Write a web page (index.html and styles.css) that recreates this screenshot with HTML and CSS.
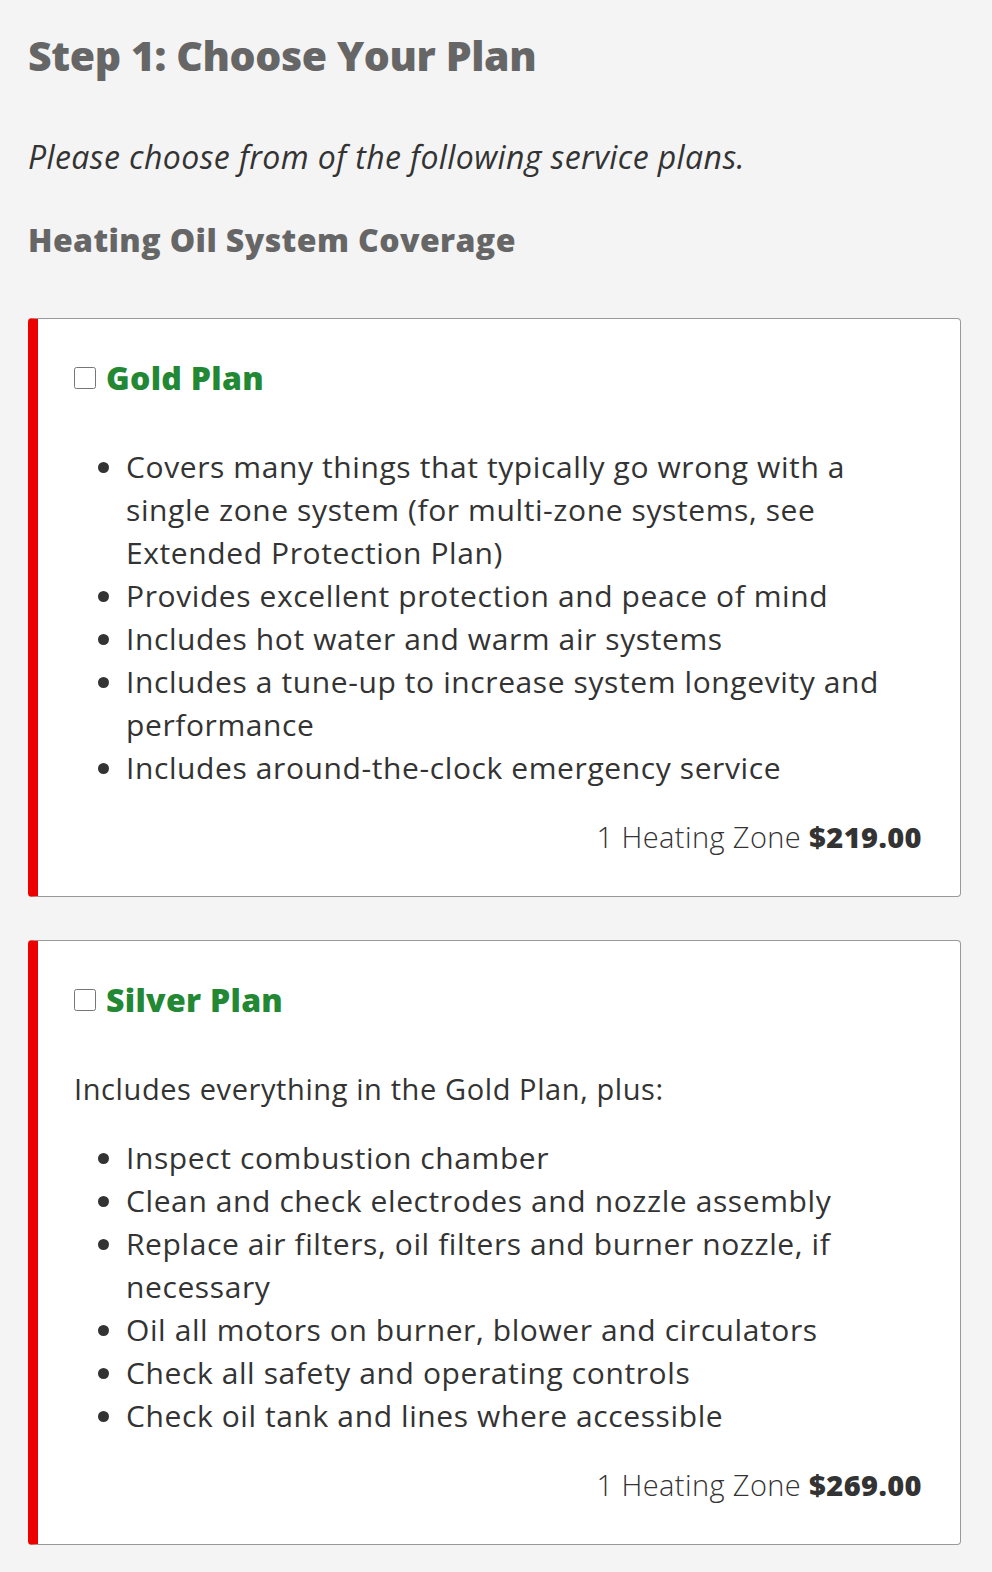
FILE: index.html
```html
<!DOCTYPE html>
<html>
    <head>
        <title>Choose Your Plan</title>
        <link rel="stylesheet" href="styles.css">
    </head>
    <body>
        <div class='wrapper'>
            <h1 class='stepTitle'>Step 1: Choose Your Plan</h1>
            <p class='intro'>Please choose from of the following service plans.</p>
            <h2 class='sectionTitle'>Heating Oil System Coverage</h2>

            <div class='plan'>
                <label class='planName'><input type='checkbox' name='plan' value='gold'> Gold Plan</label>
                <ul class='planList'>
                    <li>Covers many things that typically go wrong with a single zone system (for multi-zone systems, see Extended Protection Plan)</li>
                    <li>Provides excellent protection and peace of mind</li>
                    <li>Includes hot water and warm air systems</li>
                    <li>Includes a tune-up to increase system longevity and performance</li>
                    <li>Includes around-the-clock emergency service</li>
                </ul>
                <div class='planPrice'>1 Heating Zone <b>$219.00</b></div>
            </div>

            <div class='plan'>
                <label class='planName'><input type='checkbox' name='plan' value='silver'> Silver Plan</label>
                <p class='planNote'>Includes everything in the Gold Plan, plus:</p>
                <ul class='planList'>
                    <li>Inspect combustion chamber</li>
                    <li>Clean and check electrodes and nozzle assembly</li>
                    <li>Replace air filters, oil filters and burner nozzle, if necessary</li>
                    <li>Oil all motors on burner, blower and circulators</li>
                    <li>Check all safety and operating controls</li>
                    <li>Check oil tank and lines where accessible</li>
                </ul>
                <div class='planPrice'>1 Heating Zone <b>$269.00</b></div>
            </div>
        </div>
    </body>
</html>
```

FILE: styles.css
```css
body
{
    margin: 0;
    background-color: #f4f4f4;
    font-family: "Open Sans", "Liberation Sans", sans-serif;
    color: #333;
}

.wrapper
{
    padding: 31px 31px 30px 28px;
}

.stepTitle
{
    margin: 0;
    font-size: 41px;
    line-height: 48px;
    font-weight: 800;
    color: #666;
    letter-spacing: -0.4px;
}

.intro
{
    margin: 58px 0 0;
    font-size: 32px;
    line-height: 40px;
    font-style: italic;
    color: #333;
    letter-spacing: 0.4px;
}

.sectionTitle
{
    margin: 43px 0 0;
    font-size: 32px;
    line-height: 40px;
    font-weight: 800;
    color: #666;
    letter-spacing: 0.4px;
}

.plan
{
    margin-top: 58px;
    padding: 36px 38px 38px 36px;
    background-color: #fff;
    border: 1px solid #999;
    border-left: 10px solid #ee0000;
    border-radius: 4px;
}

.plan + .plan
{
    margin-top: 43px;
}

.planName
{
    display: flex;
    align-items: center;
    gap: 10px;
    margin-bottom: 44px;
    font-size: 32px;
    line-height: 46px;
    font-weight: 800;
    color: #228833;
    letter-spacing: 0.3px;
}

.planName input
{
    width: 22px;
    height: 22px;
    margin: 0;
}

.planNote
{
    margin: 0 0 26px;
    font-size: 29px;
    line-height: 43px;
    letter-spacing: 0.6px;
}

.planList
{
    margin: 26px 0;
    padding-left: 52px;
    font-size: 30px;
    line-height: 43px;
    letter-spacing: 0.6px;
}

.planPrice
{
    margin-top: 26px;
    text-align: right;
    font-size: 29px;
    line-height: 43px;
    font-weight: 300;
    letter-spacing: 0.4px;
}

.planPrice b
{
    font-weight: 800;
}
```
